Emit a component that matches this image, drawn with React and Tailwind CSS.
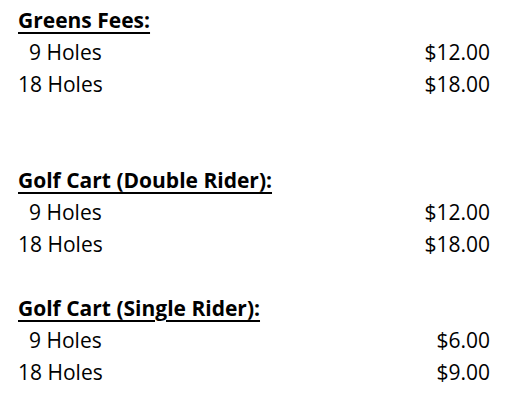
export default function App() {
  const sections = [
    { title: "Greens Fees:", rows: [["9 Holes", "$12.00"], ["18 Holes", "$18.00"]], mt: "" },
    { title: "Golf Cart (Double Rider):", rows: [["9 Holes", "$12.00"], ["18 Holes", "$18.00"]], mt: "mt-[64px]" },
    { title: "Golf Cart (Single Rider):", rows: [["9 Holes", "$6.00"], ["18 Holes", "$9.00"]], mt: "mt-[32px]" },
  ];
  return (
    <div
      className="w-[521px] h-[404px] bg-white text-black overflow-hidden pt-[4px] pl-[18px] pr-[31px] text-[21px] leading-[32px]"
      style={{ fontFamily: '"Open Sans", sans-serif' }}
    >
      {sections.map((s, i) => (
        <div key={i} className={`flex flex-col ${s.mt}`}>
          <div className="h-[32px]">
            <span className="font-bold underline decoration-[2px] underline-offset-[4px]">{s.title}</span>
          </div>
          {s.rows.map(([label, price], j) => (
            <div key={j} className="flex justify-between h-[32px]">
              <span className={label.startsWith("9") ? "pl-[11px]" : ""}>{label}</span>
              <span>{price}</span>
            </div>
          ))}
        </div>
      ))}
    </div>
  );
}
